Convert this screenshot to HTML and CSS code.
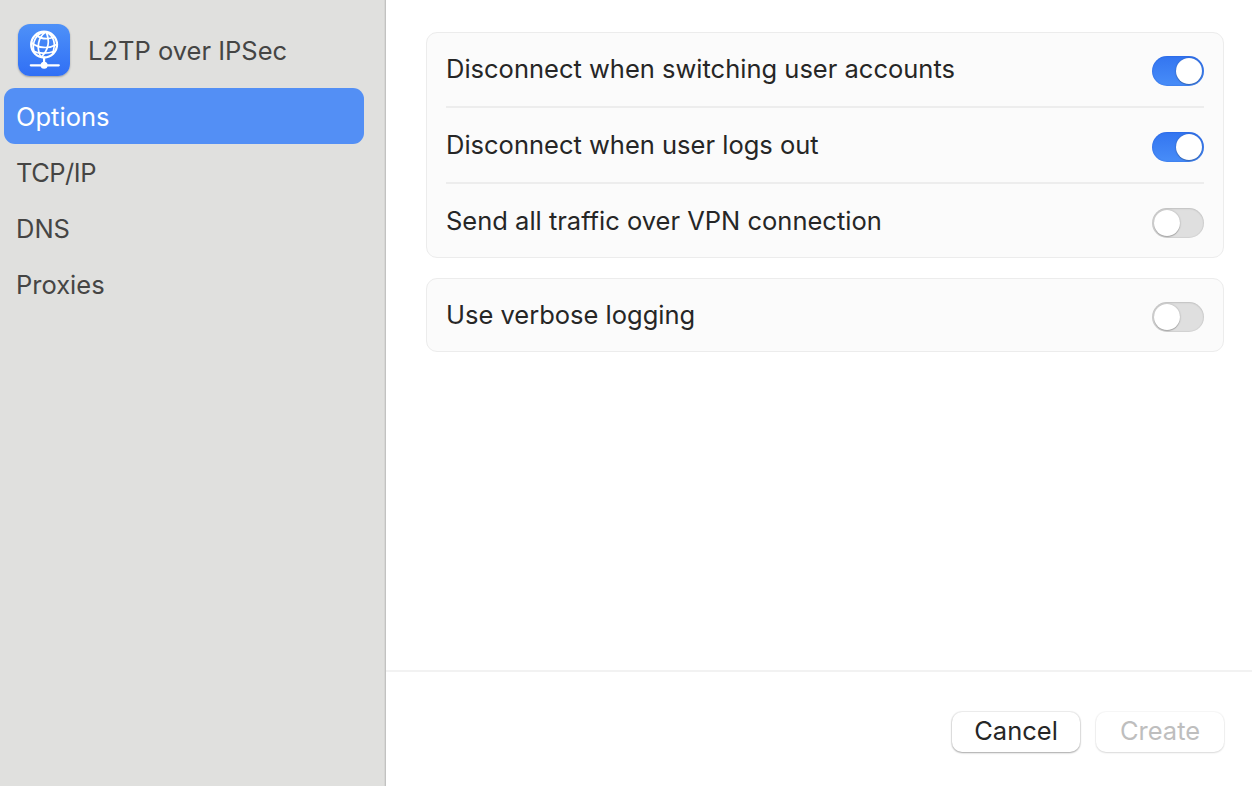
FILE: index.html
```html
<!DOCTYPE html>
<html lang="en">
<head>
<meta charset="utf-8">
<title>L2TP over IPSec</title>
<link rel="stylesheet" href="styles.css">
</head>
<body>
<div class="window">
  <aside class="sidebar">
    <header class="service">
      <svg class="service-icon" viewBox="0 0 52 52" fill="none" stroke="#fff" aria-hidden="true">
        <g stroke-width="1.7">
          <circle cx="26.100" cy="20.600" r="12.900" stroke-width="2.300"/>
          <path d="M28 7.800C20 13 18 24 23 33.200M28 7.800C32 16 31 26 23 33.200M28 7.800C36 12 38 20 34.500 29.800M28 7.800C18.500 8.500 13.500 18 16 28.200"/>
          <path d="M18 11C23 15 30 15.500 36.300 13M13.200 18.500C20 24.500 31 25 38.700 20.600M15 27C20 29.800 29 30 36.500 27.300"/>
        </g>
        <path d="M26.100 33.500V40M12.800 41.300H40.800" stroke-width="2.200" stroke-linecap="round"/>
        <circle cx="26.100" cy="41.300" r="3.500" fill="#fff" stroke="none"/>
      </svg>
      <span class="service-name">L2TP over IPSec</span>
    </header>
    <nav class="nav">
      <a class="nav-item nav-item-active"><span>Options</span></a>
      <a class="nav-item"><span class="nav-tcp">TCP/IP</span></a>
      <a class="nav-item"><span>DNS</span></a>
      <a class="nav-item"><span>Proxies</span></a>
    </nav>
  </aside>
  <main class="content">
    <div class="settings">
      <section class="group">
        <div class="row"><span class="label">Disconnect when switching user accounts</span><span class="toggle toggle-on"><i class="knob"></i></span></div>
        <div class="row"><span class="label">Disconnect when user logs out</span><span class="toggle toggle-on"><i class="knob"></i></span></div>
        <div class="row"><span class="label">Send all traffic over VPN connection</span><span class="toggle"><i class="knob"></i></span></div>
      </section>
      <section class="group">
        <div class="row"><span class="label">Use verbose logging</span><span class="toggle"><i class="knob"></i></span></div>
      </section>
    </div>
    <footer class="footer">
      <button class="button">Cancel</button>
      <button class="button button-disabled" disabled>Create</button>
    </footer>
  </main>
</div>
</body>
</html>
```
FILE: styles.css
```css
* { box-sizing: border-box; }
body {
  margin: 0;
  font-family: Inter, "Liberation Sans", sans-serif;
  font-size: 25.5px;
  line-height: 32px;
  color: #262626;
}
.window { display: flex; height: 786px; background: #fff; overflow: hidden; }
.sidebar {
  width: 386px;
  flex: none;
  padding-top: 24px;
  background: #e0e0de;
  border-right: 1px solid #c2c2c1;
  box-shadow: inset -1px 0 0 #d6d6d4;
  color: #454544;
}
.service { display: flex; align-items: center; gap: 18px; height: 52px; padding-left: 18px; }
.service-icon {
  width: 52px;
  height: 52px;
  border-radius: 12px;
  background: linear-gradient(#4e91f8, #306ff5);
  box-shadow: 0 1px 2px rgba(0, 0, 0, .3);
}
.service-name { padding-top: 1px; }
.nav { margin: 12px 21px 0 4px; }
.nav-item { display: flex; align-items: center; height: 56px; padding: 2px 0 0 12px; }
.nav-item-active { background: #538ff5; color: #fff; border-radius: 11px; }
.nav-tcp { letter-spacing: -.5px; }
.content { flex: 1; display: flex; flex-direction: column; }
.settings { flex: 1; display: flex; flex-direction: column; gap: 20px; padding: 32px 28px 0 40px; }
.group { padding: 0 19px; background: #fbfbfb; border: 1px solid #ececec; border-radius: 11px; }
.row { display: flex; align-items: center; justify-content: space-between; height: 76px; border-bottom: 2px solid #ededed; padding-top: 4px; }
.row:first-child { height: 75px; padding-top: 3px; }
.row:last-child { height: 73px; border-bottom: 0; padding-top: 5px; }
.row:only-child { height: 72px; padding-top: 4px; }
.label { padding-bottom: 4px; }
.toggle {
  width: 52px;
  height: 30px;
  padding: 2px;
  display: flex;
  border-radius: 15px;
  background: #dfdfdf;
  box-shadow: inset 0 0 1px 1px rgba(0, 0, 0, .06), inset 0 1px 2px rgba(0, 0, 0, .08);
}
.toggle-on {
  justify-content: flex-end;
  background: linear-gradient(#3375f0, #488df8);
  box-shadow: inset 0 0 1px 1px rgba(0, 50, 180, .12);
}
.knob { width: 26px; height: 26px; border-radius: 50%; background: #fff; box-shadow: 0 0 2px rgba(0, 0, 0, .25), 0 1px 1px rgba(0, 0, 0, .2); }
.footer { display: flex; justify-content: flex-end; gap: 16px; height: 116px; padding: 40px 28px 0 0; border-top: 2px solid #f2f2f2; }
.button {
  width: 128px;
  height: 40px;
  padding: 0 0 2px;
  border: 0;
  border-radius: 10px;
  background: #fff;
  color: #262626;
  font: inherit;
  box-shadow: 0 0 1px 1px rgba(0, 0, 0, .07), 0 1px 2px rgba(0, 0, 0, .3);
}
.button-disabled { color: #bebebe; box-shadow: 0 0 1px 1px rgba(0, 0, 0, .035), 0 1px 2px rgba(0, 0, 0, .12); }
```
